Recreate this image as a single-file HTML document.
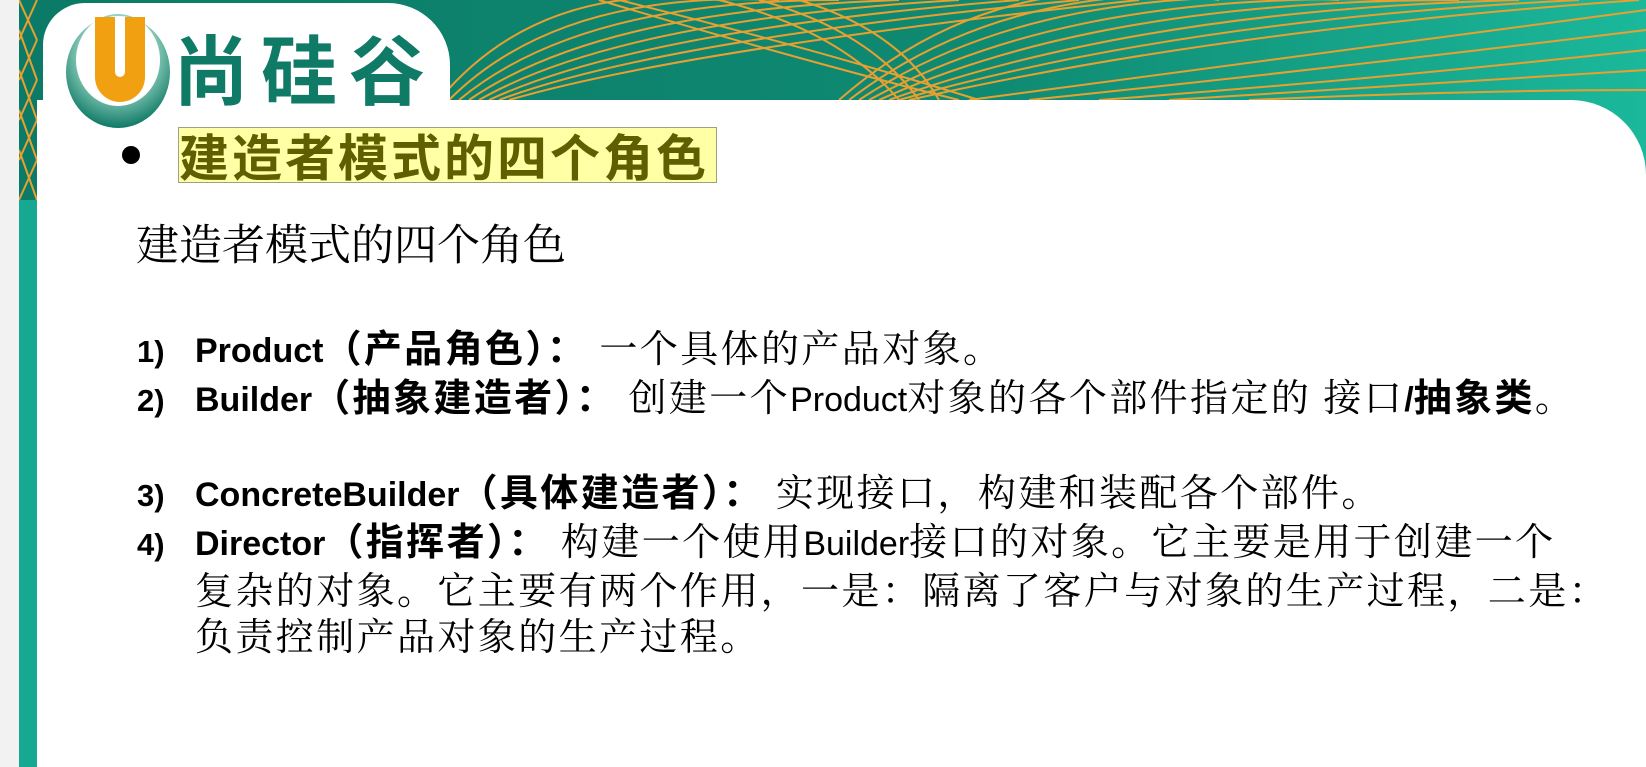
<!DOCTYPE html>
<html><head><meta charset="utf-8"><style>
html,body{margin:0;padding:0;}
body{width:1646px;height:767px;position:relative;overflow:hidden;background:#f2f2f2;font-family:"Liberation Serif","Noto Serif CJK SC",serif;}
#bg{position:absolute;left:19px;top:0;width:1627px;height:767px;}
#card{position:absolute;left:37px;top:100px;width:1609px;height:667px;background:#fff;border-top-right-radius:75px;}
#blob{position:absolute;left:43px;top:3px;width:407px;height:140px;background:#fff;border-radius:42px 62px 0 0;}
.logo{position:absolute;left:173px;top:16px;font-family:"Noto Sans CJK SC",sans-serif;font-weight:700;font-size:76px;line-height:100px;color:#0f7a66;letter-spacing:12px;}
.bullet{position:absolute;left:122px;top:146px;width:18px;height:18px;border-radius:50%;background:#000;}
.title{position:absolute;left:178px;top:127px;width:537px;height:54px;background:#ffffa6;border:1px solid #a0a080;font-family:"Noto Sans CJK SC",sans-serif;font-weight:bold;font-size:50px;line-height:54px;color:#5f5f00;letter-spacing:3px;white-space:nowrap;overflow:hidden;}
.h{position:absolute;left:136px;top:216px;font-size:43px;line-height:54px;font-family:"Noto Serif CJK SC",serif;color:#000;white-space:nowrap;}
.row{position:absolute;left:137px;font-size:38px;line-height:48px;color:#000;white-space:nowrap;font-family:"Noto Serif CJK SC",serif;letter-spacing:2.4px;}
.n{display:inline-block;width:58px;font-family:"Liberation Sans",sans-serif;font-weight:bold;font-size:31px;letter-spacing:0;}
.in{padding-left:58px;}
b{font-family:"Liberation Sans","Noto Sans CJK SC",sans-serif;font-weight:bold;}
.l{font-family:"Liberation Sans",sans-serif;font-size:34px;letter-spacing:0;}
</style></head><body>
<svg id="bg" viewBox="0 0 1627 767" preserveAspectRatio="none">
<defs><linearGradient id="g" x1="0" x2="1" y1="0" y2="0"><stop offset="0" stop-color="#0b7a67"/><stop offset="0.6" stop-color="#0f8a72"/><stop offset="1" stop-color="#1bb89c"/></linearGradient></defs>
<rect width="1627" height="767" fill="url(#g)"/>
<rect x="0" y="200" width="18" height="567" fill="#17a891"/>
<g fill="none" stroke="#e8a030" stroke-width="2">
<path d="M820 100 Q980 -40 1200 0"/><path d="M830 100 Q1000 -30 1260 0"/><path d="M840 100 Q1020 -20 1320 0"/>
<path d="M850 100 Q1050 -10 1380 0"/><path d="M860 100 Q1080 0 1440 0"/><path d="M870 100 Q1120 10 1500 0"/>
<path d="M880 100 Q1160 20 1560 0"/><path d="M890 100 Q1200 30 1620 0"/>
<path d="M950 100 Q1250 60 1627 10"/><path d="M1010 100 Q1300 70 1627 30"/><path d="M1080 100 Q1350 80 1627 50"/>
<path d="M1150 100 Q1400 85 1627 70"/><path d="M1230 100 Q1450 90 1627 90"/>
<path d="M420 100 Q520 -20 700 0"/><path d="M430 100 Q540 -10 760 0"/><path d="M440 100 Q560 0 820 0"/>
<path d="M450 100 Q580 10 880 0"/><path d="M460 100 Q600 20 940 0"/><path d="M470 100 Q620 30 1000 0"/>
<path d="M480 100 Q640 40 1060 0"/><path d="M490 100 Q660 50 1120 0"/>
<path d="M700 0 Q820 30 880 100"/><path d="M740 0 Q850 30 900 100"/><path d="M780 0 Q880 30 920 100"/>
<path d="M580 0 Q780 60 940 100"/><path d="M600 0 Q800 50 960 100"/>
<path d="M0 0 L18 40"/><path d="M0 30 L18 80"/><path d="M0 70 L18 120"/><path d="M0 110 L18 160"/><path d="M0 150 L18 200"/>
<path d="M18 0 L0 40"/><path d="M18 40 L0 80"/><path d="M18 80 L0 120"/><path d="M18 120 L0 160"/><path d="M18 160 L0 200"/>
</g>
</svg>
<div id="card"></div>
<div id="blob"></div>
<svg style="position:absolute;left:60px;top:10px" width="120" height="125" viewBox="0 0 120 125">
<defs><radialGradient id="rg" cx="0.5" cy="0.35" r="0.65"><stop offset="0.5" stop-color="#9ad6c4"/><stop offset="1" stop-color="#0f7a66"/></radialGradient></defs>
<path fill-rule="evenodd" fill="url(#rg)" d="M6 62 A52 56 0 1 0 110 62 A52 56 0 1 0 6 62 Z M16 50 A42 46 0 1 0 100 50 A42 46 0 1 0 16 50 Z"/>
<path d="M35 7 h20 v55 a5 5 0 0 0 10 0 v-55 h20 v60 a25 25 0 0 1 -50 0 Z" fill="#f0a010"/>
</svg>
<div class="logo">尚硅谷</div>
<div class="bullet"></div>
<div class="title">建造者模式的四个角色</div>
<div class="h">建造者模式的四个角色</div>
<div class="row" style="top:322px"><span class="n">1)</span><b><span class="l">Product</span>（产品角色）：</b> 一个具体的产品对象。</div>
<div class="row" style="top:371px"><span class="n">2)</span><b><span class="l">Builder</span>（抽象建造者）：</b> 创建一个<span class="l">Product</span>对象的各个部件指定的 接口<b><span class="l">/</span>抽象类</b>。</div>
<div class="row" style="top:466px"><span class="n">3)</span><b><span class="l">ConcreteBuilder</span>（具体建造者）：</b> 实现接口，构建和装配各个部件。</div>
<div class="row" style="top:515px"><span class="n">4)</span><b><span class="l">Director</span>（指挥者）：</b> 构建一个使用<span class="l">Builder</span>接口的对象。它主要是用于创建一个</div>
<div class="row in" style="top:564px">复杂的对象。它主要有两个作用，一是：隔离了客户与对象的生产过程，二是：</div>
<div class="row in" style="top:610px">负责控制产品对象的生产过程。</div>
</body></html>
